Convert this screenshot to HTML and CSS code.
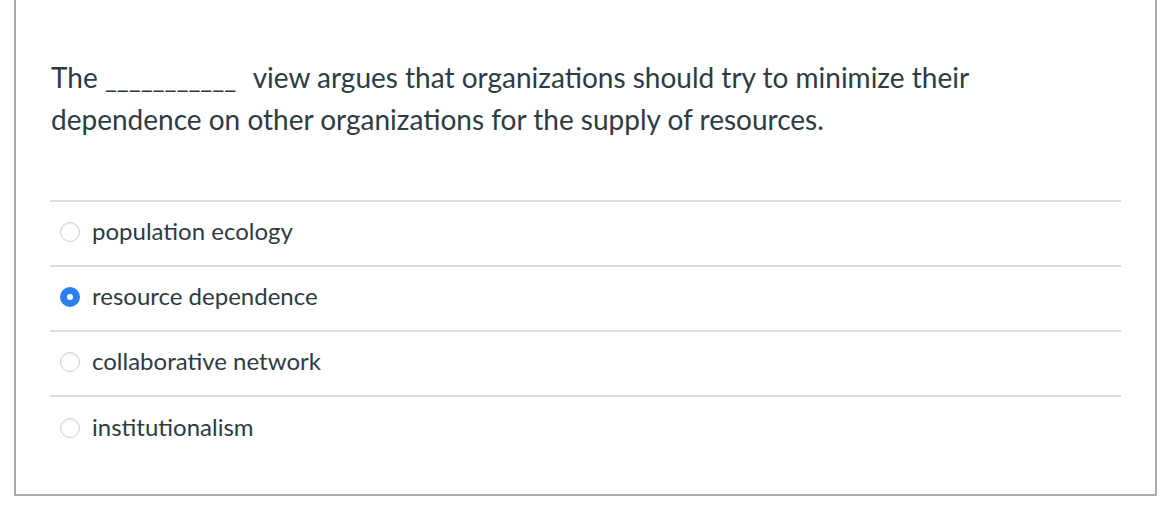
FILE: index.html
```html
<!DOCTYPE html>
<html>
<head>
<meta charset="utf-8">
<link rel="stylesheet" href="styles.css">
</head>
<body>
<div class="question">
  <div class="question-text">The <span class="blank">___________</span> view argues that organizations should try to minimize their dependence on other organizations for the supply of resources.</div>
  <div class="answers">
    <label class="answer"><span class="radio"></span><span class="answer-text">population ecology</span></label>
    <label class="answer"><span class="radio checked"></span><span class="answer-text">resource dependence</span></label>
    <label class="answer"><span class="radio"></span><span class="answer-text">collaborative network</span></label>
    <label class="answer"><span class="radio"></span><span class="answer-text">institutionalism</span></label>
  </div>
</div>
</body>
</html>
```
FILE: styles.css
```css
html, body {
  margin: 0;
  padding: 0;
  background: #ffffff;
}
body {
  font-family: Lato, "Noto Sans", sans-serif;
  color: #2d3b45;
}
.question {
  margin-left: 14px;
  width: 1143px;
  height: 496px;
  border: 2px solid #aaaaaa;
  border-top: none;
  padding: 0 34px;
  box-sizing: border-box;
}
.question-text {
  font-size: 28px;
  line-height: 42px;
  padding-top: 56px;
  padding-left: 1px;
}
.blank {
  font-size: 26px;
  line-height: 1;
  margin-right: 10px;
}
.answers {
  margin-top: 60px;
  border-top: 2px solid #dddddd;
}
.answer {
  display: flex;
  align-items: center;
  box-sizing: border-box;
  height: 65px;
  border-bottom: 2px solid #dddddd;
  padding-left: 10px;
  padding-bottom: 4px;
  gap: 12px;
}
.answer:last-child {
  border-bottom: none;
}
.radio {
  width: 20px;
  height: 20px;
  border-radius: 50%;
  border: 1px solid #d0d0d0;
  background: #ffffff;
  box-sizing: border-box;
  flex: none;
  box-shadow: inset 0 1px 2px rgba(0, 0, 0, 0.08);
}
.radio.checked {
  border: 7px solid #2b7ff0;
  box-shadow: none;
  background: #ffffff;
}
.answer-text {
  font-size: 24px;
  line-height: 28px;
  position: relative;
  top: -1px;
}
```
